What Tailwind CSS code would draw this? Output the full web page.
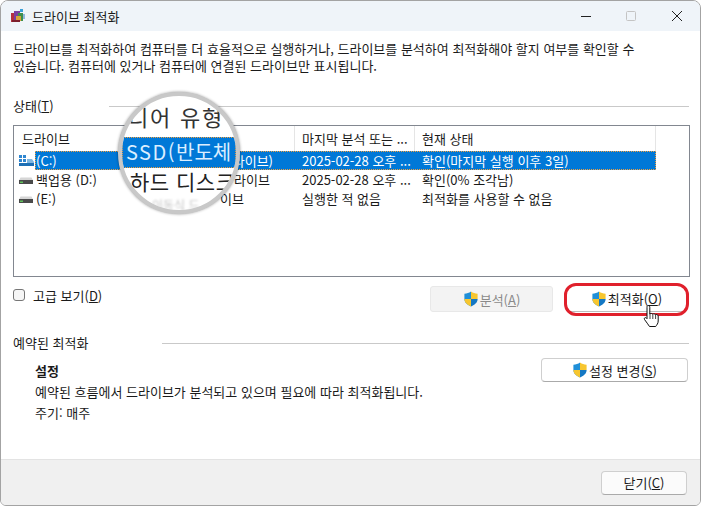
<!DOCTYPE html>
<html lang="ko">
<head>
<meta charset="utf-8">
<script src="https://cdn.jsdelivr.net/npm/@tailwindcss/browser@4"></script>
</head>
<body class="bg-white">
<svg width="0" height="0" class="absolute">
  <defs>
    <g id="shield">
      <path d="M8 .6C6 2 4 2.6 1.4 2.8V8c0 3.4 2.600 5.800 6.600 7.400z" fill="#1f8fd8"/>
      <path d="M8 .6C10 2 12 2.6 14.600 2.800V8H8z" fill="#f7c62f"/>
      <path d="M1.400 8H8v7.400C4 13.800 1.400 11.400 1.400 8z" fill="#f7c62f"/>
      <path d="M8 8h6.600c0 3.400-2.600 5.800-6.600 7.400z" fill="#1478c4"/>
    </g>
    <g id="drive">
      <path d="M2.500 5.500h11l1.500 3v3H1v-3z" fill="#d6d6d6"/>
      <rect x="1" y="8" width="14" height="4" fill="#4a4a4a"/>
      <rect x="2" y="9.500" width="3" height="1.500" fill="#5fc25a"/>
    </g>
  </defs>
</svg>
<div class="relative w-[701px] h-[506px] overflow-hidden flex flex-col border border-[#a3a3a3] rounded-t-lg rounded-b-md bg-white text-[13px] text-[#1a1a1a] font-['Noto_Sans_CJK_KR','Noto_Sans',sans-serif] leading-[17px]">

  <div class="h-[30px] shrink-0 flex items-center bg-[#eff4f9] pl-[9px]">
    <svg width="16" height="16" viewBox="0 0 16 16" class="shrink-0">
      <rect x="1" y="5" width="6" height="9" fill="#b5303f"/>
      <rect x="4" y="3" width="6" height="10" fill="#7b3fa0"/>
      <rect x="8" y="5" width="5" height="8" fill="#3f8f4c"/>
      <rect x="6" y="8" width="5" height="5" fill="#d9a33a"/>
      <rect x="10" y="1" width="3" height="3" fill="#3aa0d8"/>
      <rect x="13" y="6" width="2" height="5" fill="#8fb7dc"/>
      <rect x="2" y="12" width="8" height="2" fill="#7d1f2c"/>
    </svg>
    <span class="ml-[6px]">드라이브 최적화</span>
    <div class="ml-auto flex items-center">
      <svg width="12" height="12" viewBox="0 0 12 12" class="mr-[34px]"><path d="M1 6.500h10" stroke="#222" stroke-width="1"/></svg>
      <svg width="11" height="11" viewBox="0 0 11 11" class="mr-[34px]"><rect x=".5" y=".5" width="9" height="9" rx="1" fill="none" stroke="#c4c4c4"/></svg>
      <svg width="12" height="12" viewBox="0 0 12 12" class="mr-[17px]"><path d="M1 1l10 10M11 1L1 11" stroke="#222" stroke-width="1"/></svg>
    </div>
  </div>

  <div class="flex-1 flex flex-col px-[12px] min-h-0">
    <p class="mt-[9px] w-[660px]">드라이브를 최적화하여 컴퓨터를 더 효율적으로 실행하거나, 드라이브를 분석하여 최적화해야 할지 여부를 확인할 수<br>있습니다. 컴퓨터에 있거나 컴퓨터에 연결된 드라이브만 표시됩니다.</p>

    <div class="mt-[23px] h-[17px] flex items-center">
      <span class="w-[96px] shrink-0">상태(<span class="underline">T</span>)</span>
      <div class="flex-1 h-px bg-[#c9c9c9] mr-[-1px] mt-[2px]"></div>
    </div>

    <div class="mt-[11px] h-[152px] w-[677px] border border-[#828790] bg-white">
      <div class="h-[25px] flex items-center">
        <div class="w-[281px] h-full pl-[8px] flex items-center border-r border-[#e5e5e5]">드라이브</div>
        <div class="w-[120px] h-full pl-[7px] flex items-center border-r border-[#e5e5e5] whitespace-nowrap">마지막 분석 또는 ...</div>
        <div class="w-[241px] h-full pl-[7px] flex items-center border-r border-[#e5e5e5]">현재 상태</div>
      </div>
      <div class="h-[19px] flex items-center">
        <div class="w-[21px] pl-[4px] shrink-0">
          <svg width="17" height="16" viewBox="0 0 17 16" class="block">
            <rect x="1" y="2" width="3" height="3" fill="#2f86d0"/><rect x="5" y="2" width="3" height="3" fill="#2f86d0"/><rect x="1" y="6" width="3" height="3" fill="#2f86d0"/><rect x="5" y="6" width="3" height="3" fill="#2f86d0"/>
            <path d="M9 6h5l2 3v3H1V10h8z" fill="#7fb6e0"/><rect x="1" y="10" width="15" height="3" fill="#1d6fb5"/>
          </svg>
        </div>
        <div class="w-[621px] h-[19px] flex items-center bg-[#0078d7] text-white outline-1 outline-dotted outline-offset-[-1px] outline-[#f0a040]">
          <div class="w-[260px] pl-[1px] pr-[22px] flex justify-between"><span>(C:)</span><span>라이브)</span></div>
          <div class="w-[120px] pl-[7px] whitespace-nowrap">2025-02-28 오후 ...</div>
          <div class="pl-[7px]">확인(마지막 실행 이후 3일)</div>
        </div>
      </div>
      <div class="h-[19px] flex items-center">
        <div class="w-[21px] pl-[4px] shrink-0"><svg width="16" height="16" viewBox="0 0 16 16" class="block"><use href="#drive"/></svg></div>
        <div class="w-[260px] pl-[1px] pr-[25px] flex justify-between"><span>백업용 (D:)</span><span>라이브</span></div>
        <div class="w-[120px] pl-[7px] whitespace-nowrap">2025-02-28 오후 ...</div>
        <div class="pl-[7px]">확인(0% 조각남)</div>
      </div>
      <div class="h-[19px] flex items-center">
        <div class="w-[21px] pl-[4px] shrink-0"><svg width="16" height="16" viewBox="0 0 16 16" class="block"><use href="#drive"/></svg></div>
        <div class="w-[260px] pl-[1px] pr-[51px] flex justify-between"><span>(E:)</span><span>이브</span></div>
        <div class="w-[120px] pl-[7px]">실행한 적 없음</div>
        <div class="pl-[7px]">최적화를 사용할 수 없음</div>
      </div>
    </div>

    <div class="mt-[9px] flex items-start w-[674px] h-[26px]">
      <span class="mt-[3px] w-[12px] h-[12px] border border-[#767676] rounded-[3px] bg-[#f6f6f6] shrink-0"></span>
      <span class="ml-[8px] mt-[1px]">고급 보기(<span class="underline">D</span>)</span>
      <div class="ml-auto flex">
        <div class="w-[123px] h-[26px] flex items-center justify-center gap-[1px] bg-[#f3f3f3] border border-[#e8e8e8] rounded-[3px] text-[#8a8a8a]">
          <svg width="16" height="16" viewBox="0 0 16 16"><use href="#shield"/></svg><span>분석(<span class="underline">A</span>)</span>
        </div>
        <div class="ml-[13px] w-[121px] h-[26px] flex items-center justify-center gap-[1px] bg-white border-b border-[#bdbdbd] rounded-[4px]">
          <svg width="16" height="16" viewBox="0 0 16 16"><use href="#shield"/></svg><span>최적화(<span class="underline">O</span>)</span>
        </div>
      </div>
    </div>

    <div class="mt-[22px] h-[17px] flex items-center">
      <span class="w-[149px] shrink-0">예약된 최적화</span>
      <div class="flex-1 h-px bg-[#c9c9c9] mr-[-1px] mt-[1px]"></div>
    </div>

    <div class="flex items-start">
      <div class="pl-[22px] pt-[9px]">
        <div class="font-bold h-[21px] flex items-center">설정</div>
        <div class="h-[21px] flex items-center">예약된 흐름에서 드라이브가 분석되고 있으며 필요에 따라 최적화됩니다.</div>
        <div class="h-[21px] flex items-center">주기: 매주</div>
      </div>
      <div class="ml-auto mt-[7px] w-[147px] h-[24px] flex items-center justify-center gap-[1px] bg-white border border-[#cfcfcf] border-b-[#aaaaaa] rounded-[4px]">
        <svg width="16" height="16" viewBox="0 0 16 16"><use href="#shield"/></svg><span>설정 변경(<span class="underline">S</span>)</span>
      </div>
    </div>
  </div>

  <div class="h-[46px] shrink-0 flex items-center justify-end pr-[13px] bg-[#f0f0f0] border-t border-[#e3e3e3]">
    <div class="w-[86px] h-[24px] flex items-center justify-center bg-[#fbfbfb] border border-[#cfcfcf] border-b-[#aaaaaa] rounded-[4px]">닫기(<span class="underline">C</span>)</div>
  </div>

  <!-- red annotation around the button -->
  <div class="absolute left-[563px] top-[282px] w-[125px] h-[33px] border-[3px] border-[#e0202c] rounded-[12px]"></div>

  <!-- hand cursor -->
  <svg class="absolute left-[642px] top-[303px]" width="20" height="24" viewBox="0 0 20 24">
    <path d="M5 1.500c1 0 1.800.8 1.800 1.800V10c.6-.8 2.400-.8 2.900.2.7-.6 2.400-.5 2.800.5.8-.5 2.500-.2 2.700 1.300V17c0 2.500-1.500 4-2.500 5.500H6.500C5 20.500 3.500 18 1.500 15.500c-.7-1 .3-2.500 1.800-1.600l.7.800V3.300C4 2.300 4.200 1.500 5 1.500z" fill="#fff" stroke="#111" stroke-width="1"/>
    <path d="M7 10v5M9.800 10.500v4.500M12.600 11v4" stroke="#111" stroke-width=".8"/>
  </svg>

  <!-- magnifier -->
  <div class="absolute left-[117px] top-[91px] w-[122px] h-[122px] rounded-full overflow-hidden bg-white border-[4px] border-[#c8c8c8] shadow-[0_0_3px_rgba(0,0,0,0.45)] text-[20px] leading-[26px]">
    <div class="absolute left-[-16px] top-[7px] whitespace-nowrap text-[#333] text-[22px] tracking-[1.800px]">미디어 유형</div>
    <div class="absolute left-0 top-[41px] w-full h-[31px] bg-[#0078d7] outline-1 outline-dotted outline-offset-[-1px] outline-[#f0a040]"></div>
    <div class="absolute left-[4px] top-[43px] whitespace-nowrap text-[#dbeeff]"><span class="tracking-[1.500px]">SSD(</span>반도체</div>
    <div class="absolute left-[8px] top-[72px] whitespace-nowrap text-[#222] text-[21px] tracking-[0.500px]">하드 디스크</div>
    <div class="absolute left-[30px] top-[96px] whitespace-nowrap text-[#c4c4c4] text-[12px] blur-[1px]">이동식 드</div>
  </div>
</div>
</body>
</html>
